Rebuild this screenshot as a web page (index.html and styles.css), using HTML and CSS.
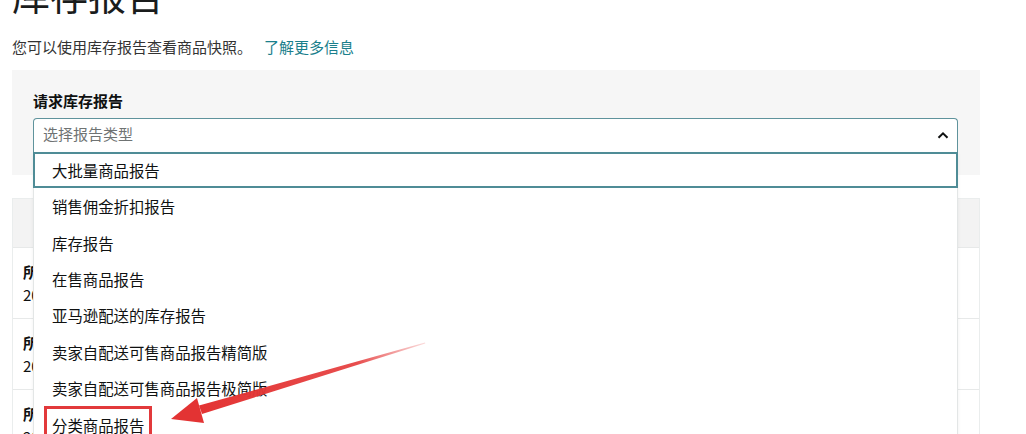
FILE: index.html
```html
<!DOCTYPE html>
<html lang="zh-CN">
<head>
<meta charset="utf-8">
<title>库存报告</title>
<link rel="stylesheet" href="styles.css">
</head>
<body>
<main class="page">
  <h1 class="title">库存报告</h1>
  <p class="intro">您可以使用库存报告查看商品快照。<a class="link" href="#">了解更多信息</a></p>

  <section class="request">
    <div class="field-label">请求库存报告</div>
    <div class="select">
      <div class="select-box">
        <span class="placeholder">选择报告类型</span>
        <svg class="caret" width="12" height="8" viewBox="0 0 12 8"><polyline points="1.5,6.8 6,2.3 10.5,6.8" fill="none" stroke="#0f1111" stroke-width="2"/></svg>
      </div>
      <ul class="options">
        <li class="option active">大批量商品报告</li>
        <li class="option">销售佣金折扣报告</li>
        <li class="option">库存报告</li>
        <li class="option">在售商品报告</li>
        <li class="option">亚马逊配送的库存报告</li>
        <li class="option">卖家自配送可售商品报告精简版</li>
        <li class="option">卖家自配送可售商品报告极简版</li>
        <li class="option"><span class="mark">分类商品报告</span></li>
      </ul>
    </div>
  </section>

  <section class="history">
    <div class="history-head"></div>
    <div class="history-row"><b>所有</b><span>2024</span></div>
    <div class="history-row"><b>所有</b><span>2024</span></div>
    <div class="history-row"><b>所有</b><span>2024</span></div>
  </section>
</main>

<svg class="arrow" width="1026" height="434" viewBox="0 0 1026 434">
  <defs>
    <linearGradient id="shaft" x1="425" y1="343" x2="200" y2="410" gradientUnits="userSpaceOnUse">
      <stop offset="0" stop-color="#e84a4a" stop-opacity="0.2"/>
      <stop offset="0.3" stop-color="#e53a3a" stop-opacity="0.9"/>
      <stop offset="1" stop-color="#e33333"/>
    </linearGradient>
  </defs>
  <polygon points="425,342.6 425.3,343.6 202,414 199,405.5" fill="url(#shaft)"/>
  <polygon points="171,419 197,398 204,423" fill="#e33333"/>
</svg>
</body>
</html>
```

FILE: styles.css
```css
html, body {
  margin: 0;
  height: 100%;
  overflow: hidden;
  background: #fff;
}

body {
  font-family: "Noto Sans CJK SC", "Noto Sans", sans-serif;
  color: #0f1111;
  font-size: 15px;
  line-height: 20px;
}

.page {
  width: 968px;
  padding-left: 12px;
}

.title {
  margin: -26px 0 0;
  font-size: 38px;
  line-height: 40px;
  font-weight: 400;
  color: #1a1c1c;
}

.intro {
  margin: 23px 0 0;
  color: #333;
}

.link {
  margin-left: 12px;
  color: #1a7f8c;
  text-decoration: none;
}

.request {
  margin-top: 13px;
  background: #f6f6f6;
  padding: 21px 22px 23px 21px;
}

.field-label {
  font-weight: 700;
  margin-bottom: 7px;
}

.select {
  position: relative;
}

.select-box {
  height: 34px;
  box-sizing: border-box;
  border: 1px solid #5f939c;
  border-bottom: none;
  border-radius: 4px 4px 0 0;
  background: #fff;
  display: flex;
  align-items: center;
  justify-content: space-between;
  padding: 0 8px 3px 9px;
}

.caret {
  margin-top: 2px;
}

.placeholder {
  color: #6f7373;
}

.options {
  position: absolute;
  top: 100%;
  left: 0;
  right: 0;
  margin: 0;
  padding: 0;
  list-style: none;
  background: #fff;
  border: 1px solid #e3e6e6;
  border-top: none;
  box-shadow: 0 2px 4px rgba(0, 0, 0, 0.06);
  font-size: 15.4px;
  z-index: 2;
}

.option {
  height: 36.4px;
  box-sizing: border-box;
  display: flex;
  align-items: center;
  padding-left: 18px;
}

.option.active {
  height: 36px;
  margin: 0 -1px;
  border: 2px solid #4f8c96;
  padding-left: 17px;
}

.mark {
  border: 3px solid #e2393b;
  padding: 6px 5px;
  margin-left: -8px;
  margin-top: 1px;
}

.history {
  margin-top: 23px;
  border: 1px solid #eaeded;
}

.history-head {
  height: 48px;
  background: #f3f3f3;
}

.history-row {
  height: 71px;
  box-sizing: border-box;
  border-top: 1px solid #e7e9e9;
  padding: 12px 10px 0;
  display: flex;
  flex-direction: column;
  line-height: 23px;
}

.history-row b {
  font-weight: 700;
}

.arrow {
  position: absolute;
  left: 0;
  top: 0;
  pointer-events: none;
  z-index: 3;
}
```
